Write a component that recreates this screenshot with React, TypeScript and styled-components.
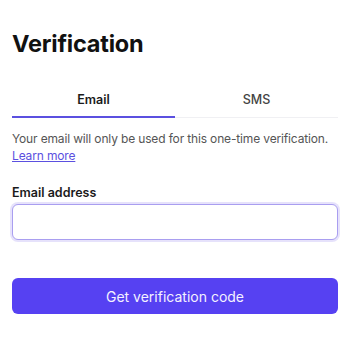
import { createGlobalStyle, styled } from "styled-components";

const GlobalStyle = createGlobalStyle`
  html, body {
    margin: 0;
    padding: 0;
    background: #ffffff;
    font-family: Inter, "Noto Sans", sans-serif;
  }
`;

const Page = styled.div`
  display: flex;
  flex-direction: column;
  padding: 30px 12px 0;
`;
const Title = styled.h1`
  margin: 0;
  font-size: 23.5px;
  font-weight: 700;
  color: #111111;
  line-height: 28px;
  letter-spacing: -0.2px;
`;
const Tabs = styled.div`
  display: flex;
  margin-top: 30px;
  border-bottom: 1px solid #f0f0f3;
`;
const Tab = styled.button<{ $active?: boolean }>`
  flex: 1;
  height: 30px;
  padding: 0 0 5px;
  border: none;
  background: none;
  font-family: inherit;
  font-size: 12.5px;
  font-weight: ${(p) => (p.$active ? 600 : 500)};
  color: ${(p) => (p.$active ? "#1a1a1a" : "#444444")};
  border-bottom: 2px solid ${(p) => (p.$active ? "#5b50e0" : "transparent")};
  margin-bottom: -1px;
  cursor: pointer;
`;
const Help = styled.p`
  margin: 12px 0 0;
  font-size: 12px;
  letter-spacing: -0.15px;
  line-height: 17px;
  color: #555555;
`;
const Link = styled.a`
  display: block;
  width: fit-content;
  color: #5b50e0;
  text-decoration: underline;
`;
const Label = styled.label`
  margin-top: 21px;
  font-size: 12.5px;
  font-weight: 600;
  color: #1a1a1a;
  line-height: 16px;
`;
const Input = styled.input`
  margin-top: 3px;
  height: 36px;
  box-sizing: border-box;
  border: 1px solid #a99ef0;
  border-radius: 6px;
  box-shadow: 0 0 0 2px #e6e2fb;
  outline: none;
  font-family: inherit;
  font-size: 13px;
  padding: 0 10px;
`;
const Submit = styled.button`
  margin-top: 38px;
  height: 36px;
  border: none;
  border-radius: 6px;
  background: #5641f2;
  color: #f4f2ff;
  font-family: inherit;
  font-size: 14px;
  font-weight: 400;
  cursor: pointer;
`;

export default function App() {
  return (
    <>
      <GlobalStyle />
      <Page>
        <Title>Verification</Title>
        <Tabs>
          <Tab $active>Email</Tab>
          <Tab>SMS</Tab>
        </Tabs>
        <Help>
          Your email will only be used for this one-time verification.
          <Link href="#">Learn more</Link>
        </Help>
        <Label htmlFor="email">Email address</Label>
        <Input id="email" type="email" />
        <Submit>Get verification code</Submit>
      </Page>
    </>
  );
}
